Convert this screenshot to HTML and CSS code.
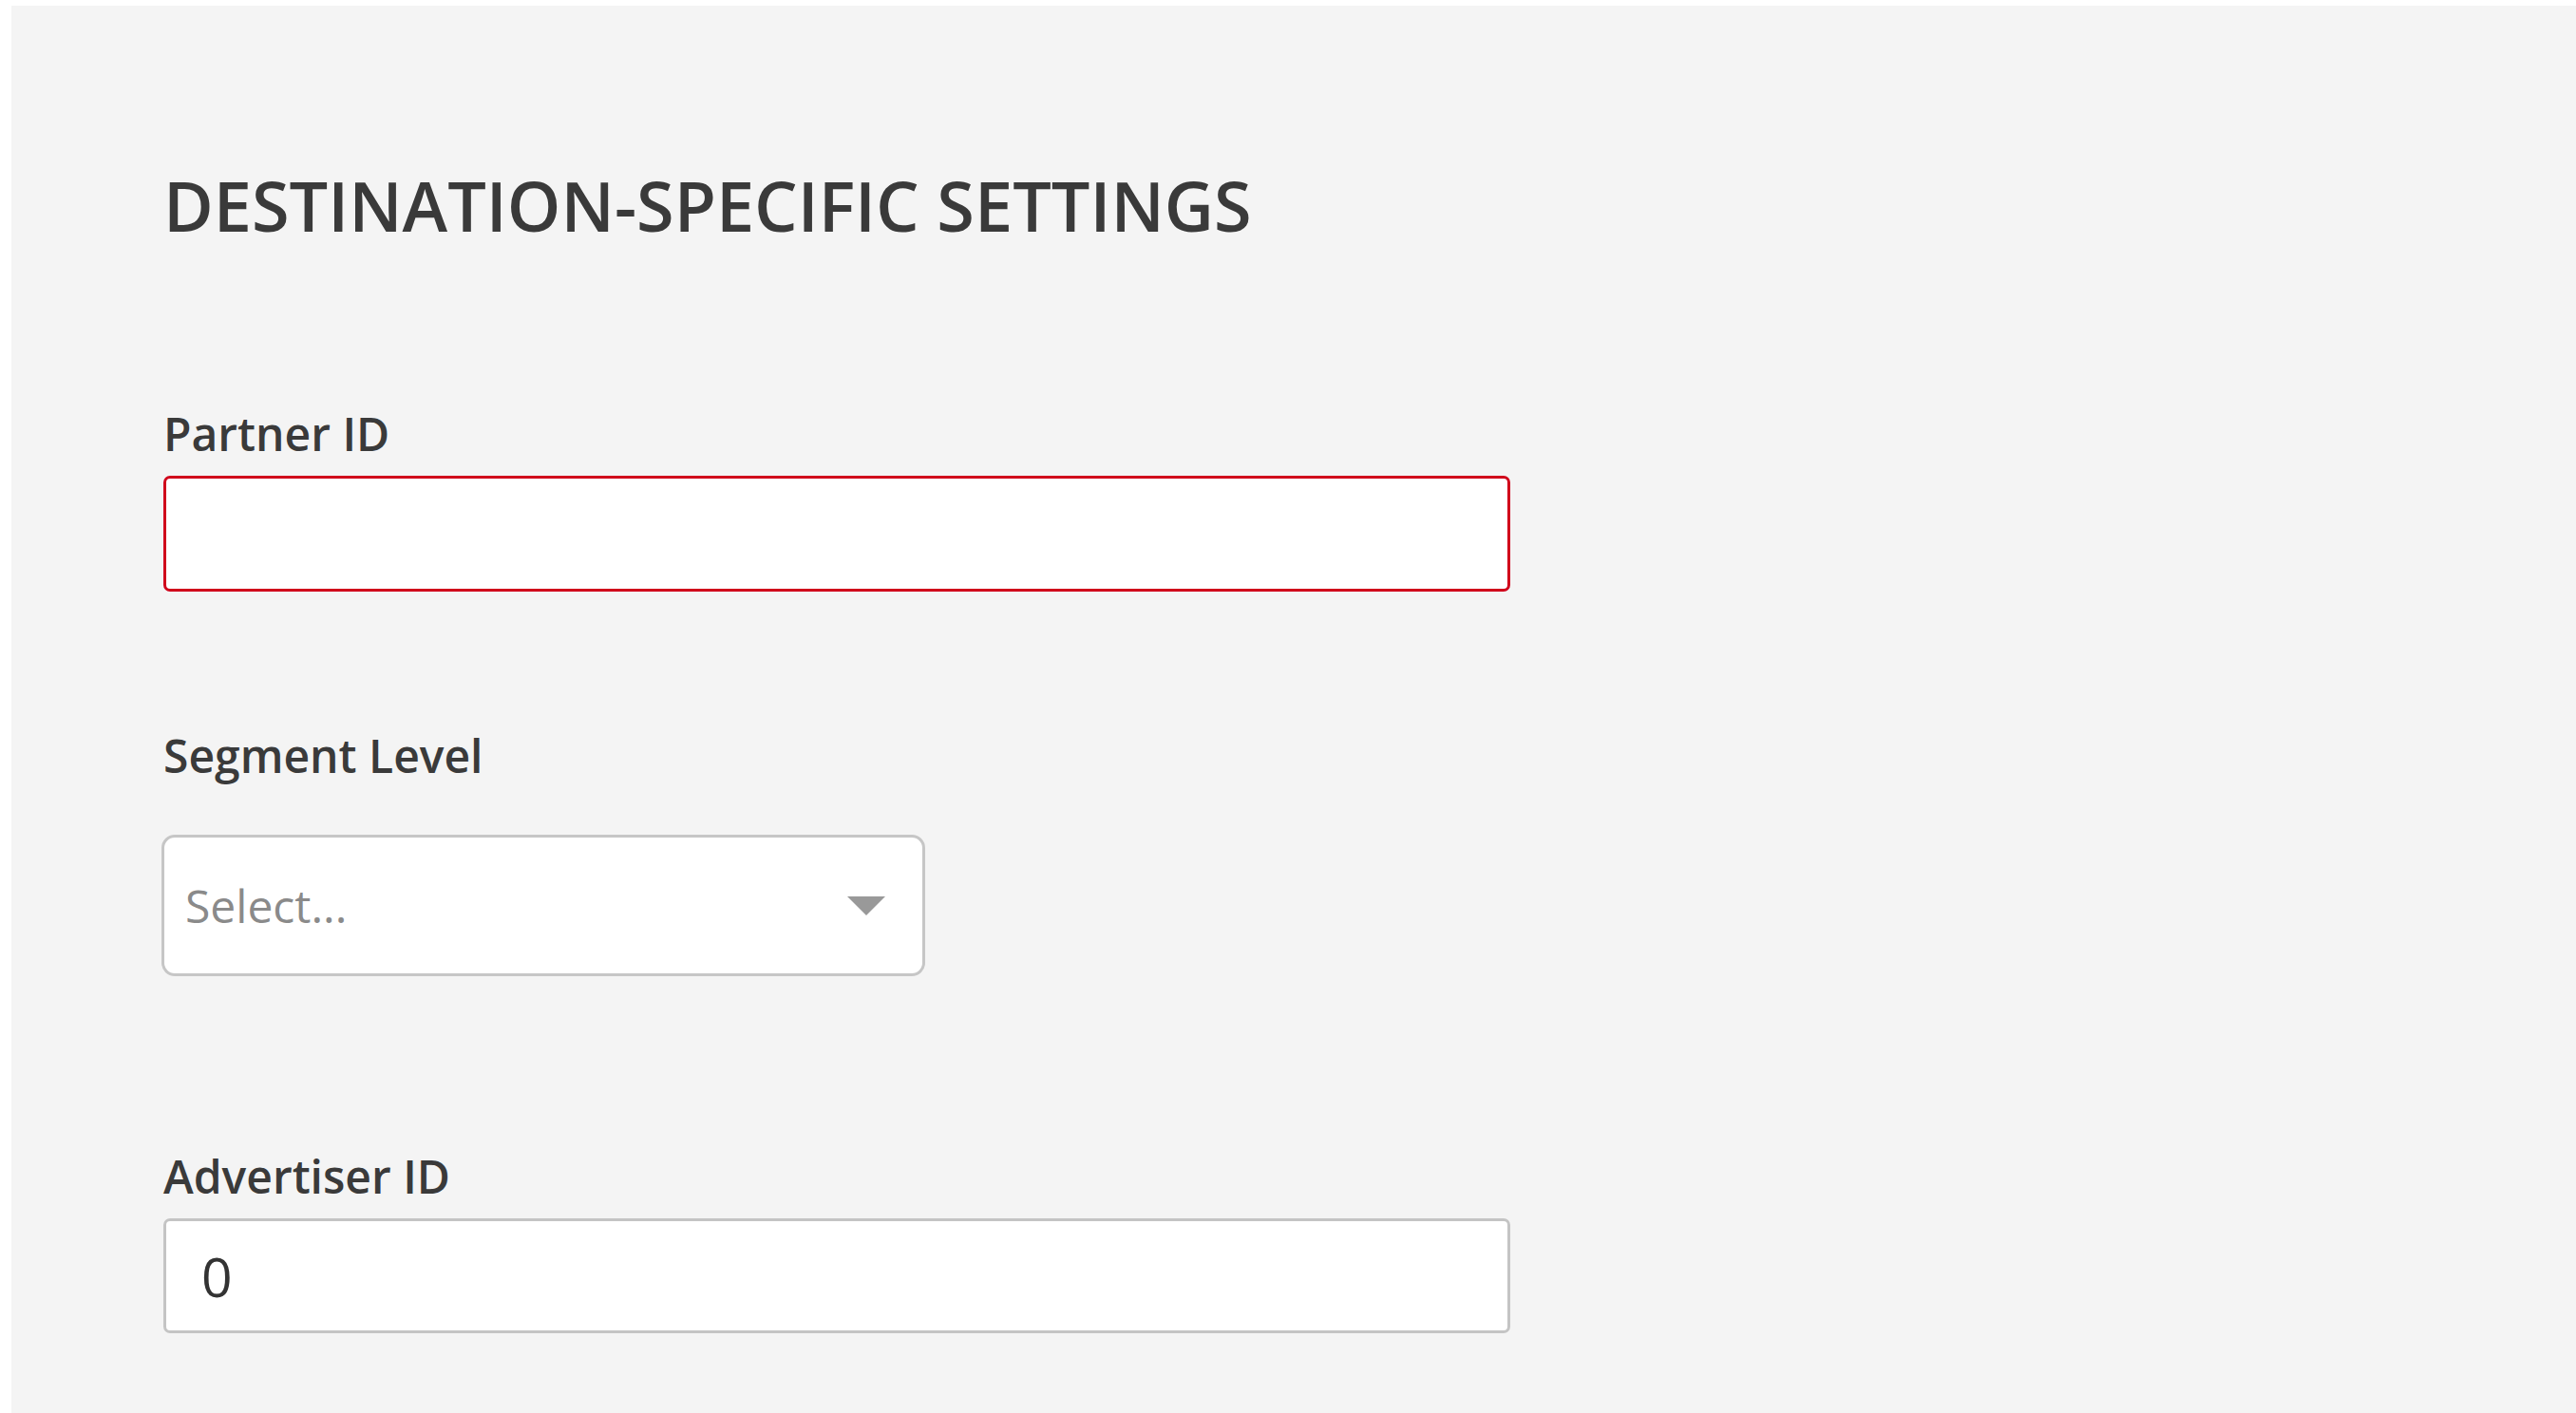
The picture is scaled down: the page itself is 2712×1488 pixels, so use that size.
FILE: index.html
```html
<!DOCTYPE html>
<html lang="en">
<head>
    <meta charset="UTF-8">
    <meta name="viewport" content="width=device-width, initial-scale=1.0">
    <title>Destination-Specific Settings</title>
    <link rel="stylesheet" href="styles.css">
</head>
<body>

<div class="panel">
    <h1>DESTINATION-SPECIFIC SETTINGS</h1>

    <div class="form-group partner">
        <label for="partner-id">Partner ID</label>
        <input type="text" id="partner-id" class="text-input invalid" value="">
    </div>

    <div class="form-group segment">
        <label>Segment Level</label>
        <div class="select">
            <span class="placeholder">Select...</span>
            <svg class="caret" width="40" height="20" viewBox="0 0 40 20">
                <polygon points="0,0 40,0 20,20" fill="#999999"/>
            </svg>
        </div>
    </div>

    <div class="form-group advertiser">
        <label for="advertiser-id">Advertiser ID</label>
        <input type="text" id="advertiser-id" class="text-input" value="0">
    </div>
</div>

</body>
</html>
```

FILE: styles.css
```css
html, body {
    height: 100%;
}
body {
    margin: 0;
    background-color: #ffffff;
    font-family: "Open Sans", "Liberation Sans", sans-serif;
}
.panel {
    margin: 6px 0 0 12px;
    min-height: calc(100% - 6px);
    padding: 166px 0 0 160px;
    box-sizing: border-box;
    background-color: #f4f4f4;
}
h1 {
    margin: 0;
    font-size: 72px;
    line-height: 88px;
    font-weight: 600;
    color: #3a3a3a;
}
.form-group label {
    display: block;
    font-size: 48px;
    line-height: 58px;
    font-weight: 600;
    color: #3a3a3a;
}
.partner {
    margin-top: 168px;
}
.segment {
    margin-top: 144px;
}
.advertiser {
    margin-top: 182px;
}
.text-input {
    display: block;
    width: 1418px;
    height: 121px;
    margin-top: 15px;
    padding: 0 0 0 37px;
    border: 3px solid #c4c4c4;
    border-radius: 7px;
    box-sizing: border-box;
    background-color: #ffffff;
    font-family: "Open Sans", "Liberation Sans", sans-serif;
    font-size: 57px;
    color: #333333;
    outline: none;
}
.text-input.invalid {
    border-color: #d0021b;
    height: 122px;
}
.select {
    display: flex;
    align-items: center;
    justify-content: space-between;
    width: 804px;
    height: 149px;
    margin: 54px 0 0 -2px;
    padding: 0 39px 0 22px;
    border: 3px solid #c6c6c6;
    border-radius: 14px;
    box-sizing: border-box;
    background-color: #ffffff;
}
.placeholder {
    font-size: 48px;
    color: #8a8a8a;
}
.caret {
    display: block;
}
```
